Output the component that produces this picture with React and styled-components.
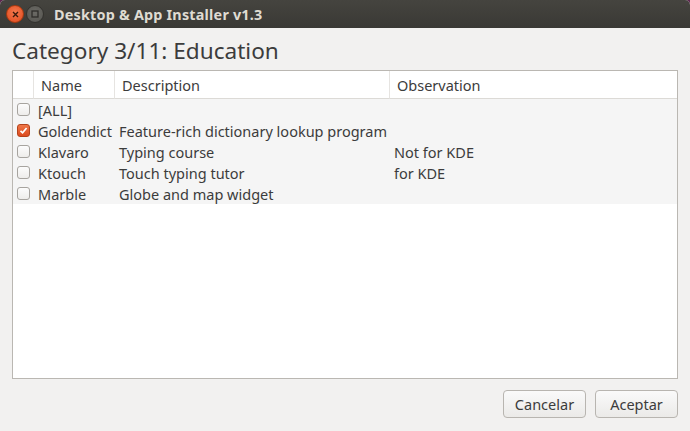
import React from 'react';
import styled, { createGlobalStyle } from 'styled-components';

const GlobalStyle = createGlobalStyle`
  html, body {
    margin: 0;
    padding: 0;
    background: #5e2750;
  }
  body {
    font-family: "Noto Sans", "DejaVu Sans", sans-serif;
  }
`;

const Window = styled.div`
  width: 690px;
  height: 431px;
  display: flex;
  flex-direction: column;
  background: #f2f1f0;
  border-radius: 5px 5px 0 0;
  overflow: hidden;
`;

const TitleBar = styled.div`
  height: 28px;
  flex-shrink: 0;
  display: flex;
  align-items: center;
  padding-left: 6px;
  gap: 2px;
  background: linear-gradient(#45443f, #3a3935);
`;

const WinButton = styled.div`
  width: 18px;
  height: 18px;
  border-radius: 50%;
  display: flex;
  align-items: center;
  justify-content: center;
  background: ${p => p.close ? 'radial-gradient(circle at 50% 40%, #f47a4e, #e0481c)' : 'radial-gradient(circle at 50% 40%, #6b6a65, #55544f)'};
  border: 1px solid ${p => p.close ? '#a8390f' : '#33322e'};
  box-sizing: border-box;
`;

const Title = styled.div`
  margin-left: 8px;
  color: #dfdbd2;
  font-weight: bold;
  font-size: 14.4px;
  letter-spacing: 0.2px;
`;

const Body = styled.div`
  flex: 1;
  display: flex;
  flex-direction: column;
  padding: 10px 12px 12px 12px;
`;

const Heading = styled.h1`
  margin: 0 0 6px 0;
  font-weight: normal;
  font-size: 22.6px;
  color: #3c3c3c;
  line-height: 26px;
`;

const TableBox = styled.div`
  height: 307px;
  border: 1px solid #bab7b2;
  background: #fff;
  display: flex;
  flex-direction: column;
`;

const Grid = styled.div`
  display: grid;
  grid-template-columns: 21px 81px 275px 1fr;
`;

const HeaderCell = styled.div`
  height: 27px;
  display: flex;
  align-items: center;
  padding-left: ${p => p.first ? '0' : '7px'};
  border-right: ${p => p.last ? 'none' : '1px solid #e6e4e1'};
  border-bottom: 1px solid #dcdad6;
  font-size: 14.5px;
  color: #3c3c3c;
  background: #fff;
`;

const Cell = styled.div`
  height: 21px;
  display: flex;
  align-items: center;
  padding-left: 4px;
  background: #f5f5f5;
  font-size: 14.5px;
  color: #3c3c3c;
  white-space: nowrap;
`;

const Box = styled.div`
  width: 13px;
  height: 13px;
  box-sizing: border-box;
  border-radius: 3px;
  border: 1px solid ${p => p.checked ? '#b4421a' : '#a7a49f'};
  background: ${p => p.checked ? 'linear-gradient(#ef7748, #dc4b1e)' : 'linear-gradient(#fcfcfc, #eeedeb)'};
  display: flex;
  align-items: center;
  justify-content: center;
`;

const Footer = styled.div`
  display: flex;
  justify-content: flex-end;
  gap: 9px;
  margin-top: 11px;
`;

const Button = styled.button`
  width: 83px;
  height: 28px;
  border: 1px solid #b8b5b0;
  border-radius: 4px;
  background: linear-gradient(#fafafa, #ebeae8);
  font-family: "Noto Sans", "DejaVu Sans", sans-serif;
  font-size: 14.5px;
  color: #3c3c3c;
  padding: 0;
`;

const rows = [
  { name: '[ALL]', desc: '', obs: '' },
  { name: 'Goldendict', desc: 'Feature-rich dictionary lookup program', obs: '', checked: true },
  { name: 'Klavaro', desc: 'Typing course', obs: 'Not for KDE' },
  { name: 'Ktouch', desc: 'Touch typing tutor', obs: 'for KDE' },
  { name: 'Marble', desc: 'Globe and map widget', obs: '' },
];

const Check = ({ checked }) => (
  <Box checked={checked}>
    {checked && (
      <svg width="9" height="9" viewBox="0 0 9 9">
        <path d="M1.5 4.8 L3.6 6.8 L7.6 2" fill="none" stroke="#fff" strokeWidth="1.7" />
      </svg>
    )}
  </Box>
);

export default function App() {
  return (
    <>
      <GlobalStyle />
      <Window>
        <TitleBar>
          <WinButton close>
            <svg width="7" height="7" viewBox="0 0 7 7">
              <path d="M1 1 L6 6 M6 1 L1 6" stroke="#3a1a0c" strokeWidth="1.4" />
            </svg>
          </WinButton>
          <WinButton>
            <svg width="8" height="8" viewBox="0 0 8 8">
              <rect x="1" y="1" width="6" height="6" fill="none" stroke="#2e2d2a" strokeWidth="1.3" />
            </svg>
          </WinButton>
          <Title>Desktop &amp; App Installer v1.3</Title>
        </TitleBar>
        <Body>
          <Heading>Category 3/11: Education</Heading>
          <TableBox>
            <Grid>
              <HeaderCell first />
              <HeaderCell>Name</HeaderCell>
              <HeaderCell>Description</HeaderCell>
              <HeaderCell last>Observation</HeaderCell>
              {rows.map(r => (
                <React.Fragment key={r.name}>
                  <Cell><Check checked={r.checked} /></Cell>
                  <Cell>{r.name}</Cell>
                  <Cell>{r.desc}</Cell>
                  <Cell>{r.obs}</Cell>
                </React.Fragment>
              ))}
            </Grid>
          </TableBox>
          <Footer>
            <Button>Cancelar</Button>
            <Button>Aceptar</Button>
          </Footer>
        </Body>
      </Window>
    </>
  );
}
